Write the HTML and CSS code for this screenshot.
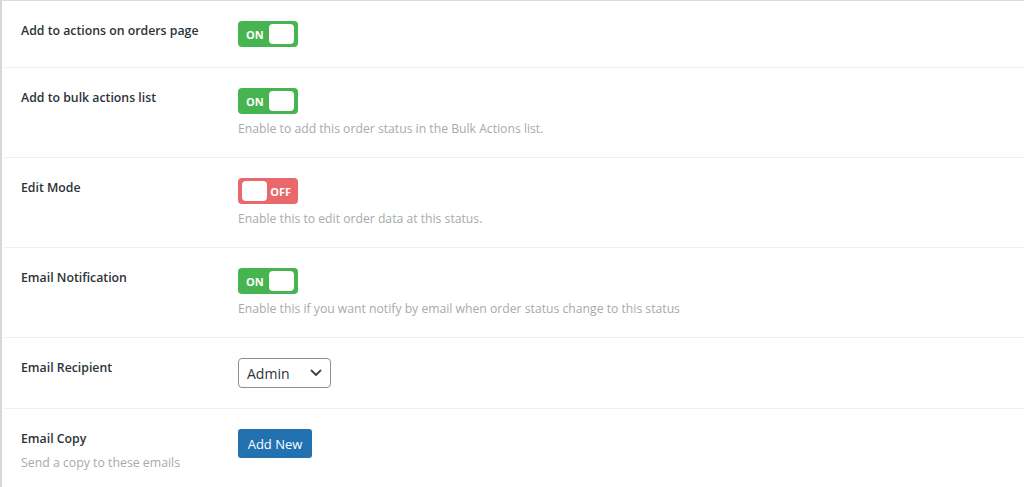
FILE: index.html
```html
<!DOCTYPE html>
<html>
<head>
<meta charset="utf-8">
<link rel="stylesheet" href="styles.css">
</head>
<body>
<div class="panel">
  <div class="row">
    <div class="label">Add to actions on orders page</div>
    <div class="control">
      <span class="toggle on"><span class="txt">ON</span><span class="knob"></span></span>
    </div>
  </div>
  <div class="row">
    <div class="label">Add to bulk actions list</div>
    <div class="control">
      <span class="toggle on"><span class="txt">ON</span><span class="knob"></span></span>
      <p class="desc">Enable to add this order status in the Bulk Actions list.</p>
    </div>
  </div>
  <div class="row">
    <div class="label">Edit Mode</div>
    <div class="control">
      <span class="toggle off"><span class="knob"></span><span class="txt">OFF</span></span>
      <p class="desc">Enable this to edit order data at this status.</p>
    </div>
  </div>
  <div class="row">
    <div class="label">Email Notification</div>
    <div class="control">
      <span class="toggle on"><span class="txt">ON</span><span class="knob"></span></span>
      <p class="desc">Enable this if you want notify by email when order status change to this status</p>
    </div>
  </div>
  <div class="row">
    <div class="label">Email Recipient</div>
    <div class="control">
      <div class="select"><span>Admin</span>
        <svg width="12" height="8" viewBox="0 0 12 8"><path d="M1.5 1.5 L6 6 L10.5 1.5" fill="none" stroke="#3c434a" stroke-width="1.8" stroke-linecap="round" stroke-linejoin="round"/></svg>
      </div>
    </div>
  </div>
  <div class="row last">
    <div class="label">Email Copy<p class="sub">Send a copy to these emails</p></div>
    <div class="control">
      <button class="btn">Add New</button>
    </div>
  </div>
</div>
</body>
</html>
```

FILE: styles.css
```css
html, body {
  margin: 0;
  padding: 0;
  background: #fff;
}
body {
  font-family: "Open Sans", "Noto Sans", sans-serif;
  width: 1024px;
  height: 487px;
  overflow: hidden;
}
.panel {
  border-left: 2px solid #d6d6d6;
  border-top: 1px solid #dcdcdc;
  height: 487px;
  box-sizing: border-box;
}
.row {
  display: flex;
  padding: 20px 0 20px 17px;
  margin-left: 2px;
  border-bottom: 1px solid #f0f0f1;
}
.row.last { border-bottom: none; }
.label {
  width: 217px;
  flex: none;
  font-size: 12.3px;
  font-weight: 600;
  color: #2c3338;
  line-height: 20px;
}
.sub {
  margin: 4px 0 0;
  font-weight: 400;
  color: #a7aaad;
  line-height: 20px;
}
.control {
  flex: 1;
}
.toggle {
  display: flex;
  align-items: center;
  box-sizing: border-box;
  width: 60px;
  height: 26px;
  border-radius: 4px;
  padding: 0 4px 0 8px;
  justify-content: space-between;
}
.toggle.on { background: #46b450; }
.toggle.off { background: #e8686c; padding: 0 7px 0 4px; }
.toggle .txt {
  color: #fff;
  font-size: 11px;
  font-weight: 700;
  line-height: 1;
}
.toggle .knob {
  width: 25px;
  height: 20px;
  background: #fff;
  border-radius: 4px;
}
.desc {
  margin: 6px 0 0;
  font-size: 12.2px;
  color: #a7aaad;
  line-height: 17px;
}
.select {
  display: flex;
  align-items: center;
  justify-content: space-between;
  box-sizing: border-box;
  width: 93px;
  height: 30px;
  border: 1px solid #8c8f94;
  border-radius: 4px;
  padding: 0 8px 0 8px;
  font-size: 14px;
  color: #2c3338;
}
.btn {
  font-family: "Open Sans", "Noto Sans", sans-serif;
  background: #2271b1;
  color: #fff;
  border: none;
  border-radius: 3px;
  width: 74px;
  height: 29px;
  font-size: 13px;
  padding: 0;
}
```
